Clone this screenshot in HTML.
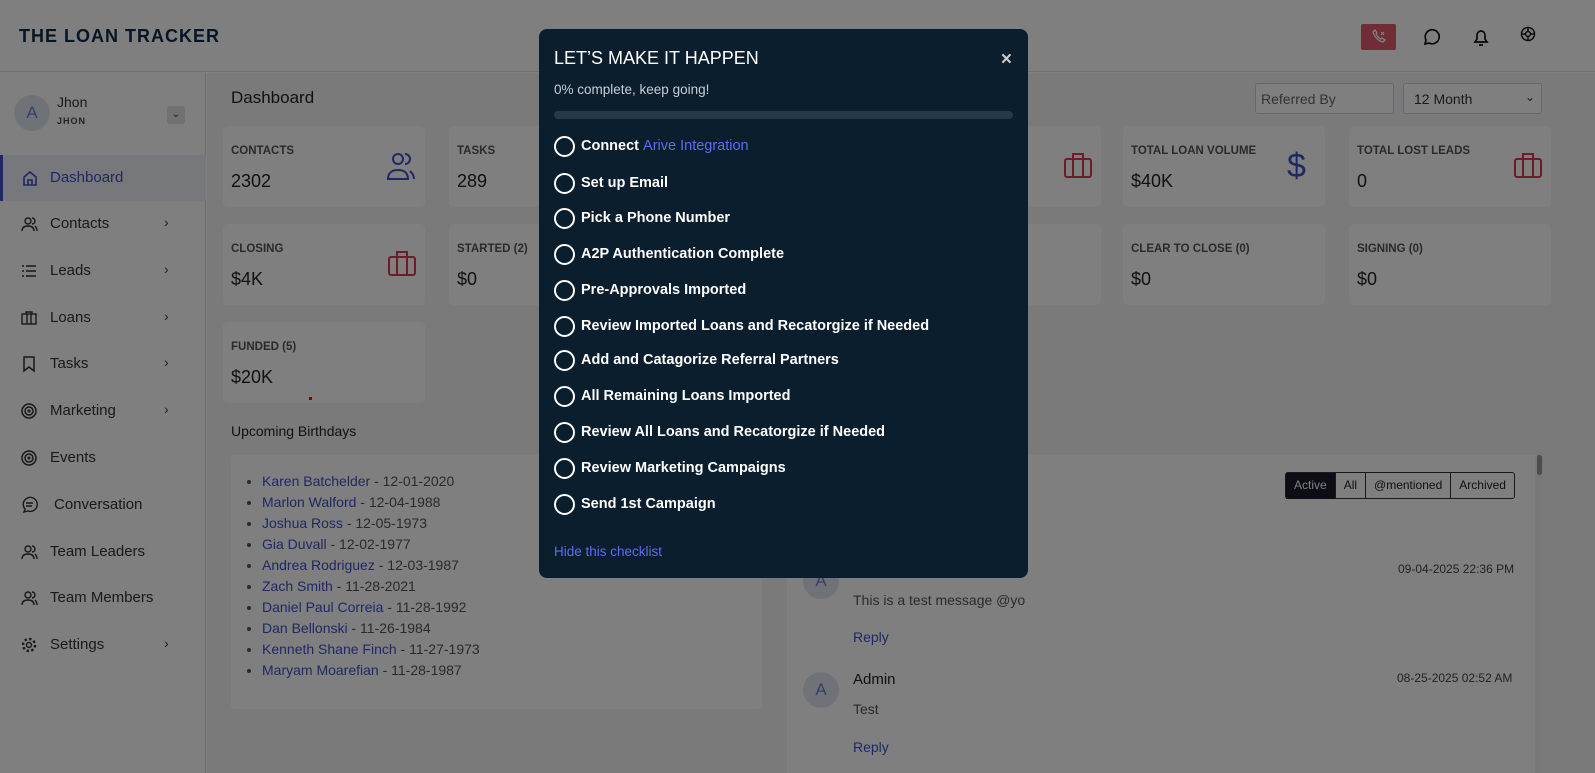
<!DOCTYPE html>
<html><head><meta charset="utf-8"><style>
*{box-sizing:border-box;margin:0;padding:0}
body{width:1595px;height:773px;overflow:hidden;font-family:"Liberation Sans",sans-serif;background:#fff;position:relative;color:#333}
.top{position:absolute;left:0;top:0;width:1595px;height:72px;background:#fff;border-bottom:1px solid #ddd}
.logo{position:absolute;left:19px;top:26px;font-weight:bold;font-size:18px;letter-spacing:1px;color:#0b2a45}
.side{position:absolute;left:0;top:73px;width:206px;height:700px;background:#fff;border-right:1px solid #ddd}
.main{position:absolute;left:207px;top:73px;width:1388px;height:700px;background:#f4f5f7}
.av{position:absolute;width:36px;height:36px;border-radius:50%;background:#dfe6f0;color:#6a7fd0;font-size:17px;text-align:center;line-height:36px}
.nav{position:absolute;left:0;width:206px;height:46px;font-size:15px;color:#333}
.nav span{position:absolute;left:50px;top:14px}
.nav svg{position:absolute;left:20px;top:14px}
.nav i{position:absolute;left:164px;top:13px;font-style:normal;font-size:14px;color:#444}
.card{position:absolute;width:202px;height:81px;background:#fff;border-radius:5px}
.card b{position:absolute;left:8px;top:19px;font-size:11.5px;font-weight:bold;color:#555}
.card em{position:absolute;left:8px;top:45px;font-style:normal;font-size:18px;color:#222}
.card svg{position:absolute;right:8px;top:25px}
.ov{position:absolute;left:0;top:0;width:1595px;height:773px;background:rgba(0,0,0,.5)}
.modal{position:absolute;left:539px;top:29px;width:489px;height:549px;background:#0b1e2d;border-radius:8px;color:#fff}
.it{position:absolute;left:15px;font-size:14.5px;font-weight:bold;line-height:18px}
.it:before{content:"";position:absolute;left:0;top:-1px;width:17px;height:17px;border:2px solid #fff;border-radius:50%}
.it span{margin-left:27px}
.bd{font-size:14px;line-height:21px;color:#555}
.bd a{color:#3f51c8;text-decoration:none}
.btn{display:inline-block;padding:0 8px;height:26px;line-height:25px;font-size:12px;border-left:1px solid #333}
</style></head><body>
<div class="top"><div class="logo">THE LOAN TRACKER</div>
<div style="position:absolute;left:1361px;top:24px;width:35px;height:26px;background:#e05b6a;border-radius:2px"><svg width="35" height="26"><path d="M12 8c1 4 5 9 10 10l2-2-3-2-1 1c-2-1-4-3-5-5l1-1-2-3z" fill="none" stroke="#fff" stroke-width="1.3"/><path d="M20 8l3 3M23 8l-3 3" stroke="#fff" stroke-width="1.2"/></svg></div>
<svg style="position:absolute;left:1421px;top:28px" width="20" height="20"><path d="M4 16l1-4a7 7 0 1 1 3 3z" fill="none" stroke="#111" stroke-width="1.7"/></svg>
<svg style="position:absolute;left:1470px;top:26px" width="22" height="22"><path d="M5 16h12l-2-3V9a4 4 0 0 0-8 0v4zM9 19h4" fill="none" stroke="#111" stroke-width="1.7"/></svg>
<svg style="position:absolute;left:1519px;top:25px" width="18" height="18"><circle cx="9" cy="9" r="6.5" fill="none" stroke="#111" stroke-width="1.5"/><circle cx="9" cy="9" r="2.5" fill="none" stroke="#111" stroke-width="1.5"/><path d="M9 2v4M9 12v4M2 9h4M12 9h4" stroke="#111" stroke-width="1.5"/></svg>
</div>
<div class="side">
<div class="av" style="left:14px;top:22px">A</div>
<div style="position:absolute;left:57px;top:21px;font-size:14px">Jhon</div>
<div style="position:absolute;left:57px;top:43px;font-size:9px;font-weight:bold;letter-spacing:1px;color:#444">JHON</div>
<div style="position:absolute;left:167px;top:33px;width:18px;height:18px;background:#e2e2e2;border-radius:3px;text-align:center;font-size:10px;line-height:18px">&#8964;</div>
<div class="nav" style="top:82px;background:#eef0f6;border-left:3px solid #3f51c8;color:#3f51c8"><svg width="18" height="18" style="left:18px"><path d="M3 8l6-5 6 5v8H3zM7 16v-5h4v5" fill="none" stroke="#3f51c8" stroke-width="1.6"/></svg><span style="left:47px">Dashboard</span></div>
<div class="nav" style="top:128px"><svg width="18" height="18"><circle cx="8" cy="6" r="3" fill="none" stroke="#333" stroke-width="1.4"/><path d="M2 16c0-4 3-5 6-5s6 1 6 5M12 3a3 3 0 0 1 0 6M15 11c1 1 2 2 2 5" fill="none" stroke="#333" stroke-width="1.4"/></svg><span>Contacts</span><i>›</i></div>
<div class="nav" style="top:175px"><svg width="18" height="18"><path d="M2 4h2M6 4h10M2 9h2M6 9h10M2 14h2M6 14h10" stroke="#333" stroke-width="1.5"/></svg><span>Leads</span><i>›</i></div>
<div class="nav" style="top:222px"><svg width="18" height="18"><rect x="2" y="5" width="14" height="10" fill="none" stroke="#333" stroke-width="1.4"/><path d="M6 5V3h6v2M7 5v10M11 5v10" fill="none" stroke="#333" stroke-width="1.4"/></svg><span>Loans</span><i>›</i></div>
<div class="nav" style="top:268px"><svg width="18" height="18"><path d="M4 2h10v14l-5-4-5 4z" fill="none" stroke="#333" stroke-width="1.5"/></svg><span>Tasks</span><i>›</i></div>
<div class="nav" style="top:315px"><svg width="18" height="18"><circle cx="9" cy="9" r="7" fill="none" stroke="#333" stroke-width="1.5"/><circle cx="9" cy="9" r="4" fill="none" stroke="#333" stroke-width="1.5"/><circle cx="9" cy="9" r="1.5" fill="#333"/></svg><span>Marketing</span><i>›</i></div>
<div class="nav" style="top:362px"><svg width="18" height="18"><circle cx="9" cy="9" r="7" fill="none" stroke="#333" stroke-width="1.5"/><circle cx="9" cy="9" r="4" fill="none" stroke="#333" stroke-width="1.5"/><circle cx="9" cy="9" r="1.5" fill="#333"/></svg><span>Events</span></div>
<div class="nav" style="top:409px"><svg width="18" height="18"><path d="M4 16l1-3a7 7 0 1 1 3 2zM6 7h7M6 10h6" fill="none" stroke="#333" stroke-width="1.4"/></svg><span style="left:54px">Conversation</span></div>
<div class="nav" style="top:456px"><svg width="18" height="18"><circle cx="8" cy="6" r="3" fill="none" stroke="#333" stroke-width="1.4"/><path d="M2 16c0-4 3-5 6-5s6 1 6 5M12 3a3 3 0 0 1 0 6M15 11c1 1 2 2 2 5" fill="none" stroke="#333" stroke-width="1.4"/></svg><span>Team Leaders</span></div>
<div class="nav" style="top:502px"><svg width="18" height="18"><circle cx="8" cy="6" r="3" fill="none" stroke="#333" stroke-width="1.4"/><path d="M2 16c0-4 3-5 6-5s6 1 6 5M12 3a3 3 0 0 1 0 6M15 11c1 1 2 2 2 5" fill="none" stroke="#333" stroke-width="1.4"/></svg><span>Team Members</span></div>
<div class="nav" style="top:549px"><svg width="18" height="18"><circle cx="9" cy="9" r="2.5" fill="none" stroke="#333" stroke-width="1.4"/><circle cx="9" cy="9" r="6" fill="none" stroke="#333" stroke-width="2.4" stroke-dasharray="2.4 2.3"/></svg><span>Settings</span><i>›</i></div>
</div>
<div class="main">
<div style="position:absolute;left:24px;top:15px;font-size:17px;color:#222">Dashboard</div>
<div style="position:absolute;left:1048px;top:10px;width:139px;height:31px;background:#fff;border:1px solid #ccd;border-radius:3px;font-size:14px;color:#666;padding:7px 5px">Referred By</div>
<div style="position:absolute;left:1196px;top:10px;width:139px;height:31px;background:#fff;border:1px solid #ccd;border-radius:3px;font-size:14px;color:#333;padding:7px 10px">12 Month<span style="position:absolute;right:6px;top:6px;font-size:12px">&#8964;</span></div>
</div>
<div class="card" style="left:223px;top:126px"><b>CONTACTS</b><em>2302</em><svg width="32" height="30"><circle cx="13" cy="8" r="5" fill="none" stroke="#3f51c8" stroke-width="2"/><path d="M3 28c0-7 5-9 10-9s10 2 10 9zM20 3a5 5 0 0 1 0 10M25 20c2 2 4 4 4 8" fill="none" stroke="#3f51c8" stroke-width="2"/></svg></div>
<div class="card" style="left:449px;top:126px"><b>TASKS</b><em>289</em></div>
<div class="card" style="left:899px;top:126px"><svg width="30" height="28"><rect x="2" y="8" width="26" height="18" rx="2" fill="none" stroke="#d83a4e" stroke-width="2"/><path d="M10 8V3h10v5M10 8v18M20 8v18" fill="none" stroke="#d83a4e" stroke-width="2"/></svg></div>
<div class="card" style="left:1123px;top:126px"><b>TOTAL LOAN VOLUME</b><em>$40K</em><svg width="24" height="34" style="top:22px;right:14px"><text x="0" y="29" font-size="34" fill="#3f51c8" font-family="Liberation Sans">$</text></svg></div>
<div class="card" style="left:1349px;top:126px"><b>TOTAL LOST LEADS</b><em>0</em><svg width="30" height="28"><rect x="2" y="8" width="26" height="18" rx="2" fill="none" stroke="#d83a4e" stroke-width="2"/><path d="M10 8V3h10v5M10 8v18M20 8v18" fill="none" stroke="#d83a4e" stroke-width="2"/></svg></div>
<div class="card" style="left:223px;top:224px"><b>CLOSING</b><em>$4K</em><svg width="30" height="28"><rect x="2" y="8" width="26" height="18" rx="2" fill="none" stroke="#d83a4e" stroke-width="2"/><path d="M10 8V3h10v5M10 8v18M20 8v18" fill="none" stroke="#d83a4e" stroke-width="2"/></svg></div>
<div class="card" style="left:449px;top:224px"><b>STARTED (2)</b><em>$0</em></div>
<div class="card" style="left:899px;top:224px"><b style="left:125px">)</b></div>
<div class="card" style="left:1123px;top:224px"><b>CLEAR TO CLOSE (0)</b><em>$0</em></div>
<div class="card" style="left:1349px;top:224px"><b>SIGNING (0)</b><em>$0</em></div>
<div class="card" style="left:223px;top:322px"><b>FUNDED (5)</b><em>$20K</em><div style="position:absolute;left:86px;top:75px;width:3px;height:3px;background:#f00"></div></div>
<div style="position:absolute;left:231px;top:423px;font-size:14px;color:#222">Upcoming Birthdays</div>
<div style="position:absolute;left:231px;top:455px;width:531px;height:254px;background:#fff;border-radius:4px"></div>
<ul class="bd" style="position:absolute;left:262px;top:471px;list-style:disc">
<li><a>Karen Batchelder</a> - 12-01-2020</li><li><a>Marlon Walford</a> - 12-04-1988</li><li><a>Joshua Ross</a> - 12-05-1973</li><li><a>Gia Duvall</a> - 12-02-1977</li><li><a>Andrea Rodriguez</a> - 12-03-1987</li><li><a>Zach Smith</a> - 11-28-2021</li><li><a>Daniel Paul Correia</a> - 11-28-1992</li><li><a>Dan Bellonski</a> - 11-26-1984</li><li><a>Kenneth Shane Finch</a> - 11-27-1973</li><li><a>Maryam Moarefian</a> - 11-28-1987</li></ul>
<div style="position:absolute;left:787px;top:455px;width:748px;height:318px;background:#fff"></div>
<div style="position:absolute;left:1535px;top:455px;width:8px;height:318px;background:#f0f0f0"><div style="margin:0 auto;width:5px;height:20px;background:#999;border-radius:3px"></div></div>
<div style="position:absolute;left:1285px;top:472px;height:27px;border:1px solid #333;border-radius:3px;color:#222;white-space:nowrap;background:#fff"><span class="btn" style="background:#1b1b2b;color:#fff;border:0">Active</span><span class="btn">All</span><span class="btn">@mentioned</span><span class="btn">Archived</span></div>
<div class="av" style="left:803px;top:563px">A</div>
<div style="position:absolute;left:1398px;top:562px;font-size:12px;color:#444">09-04-2025 22:36 PM</div>
<div style="position:absolute;left:853px;top:592px;font-size:14px;color:#555">This is a test message @yo</div>
<div style="position:absolute;left:853px;top:629px;font-size:14px;color:#3f51c8">Reply</div>
<div class="av" style="left:803px;top:672px">A</div>
<div style="position:absolute;left:853px;top:671px;font-size:15px;color:#222">Admin</div>
<div style="position:absolute;left:1397px;top:671px;font-size:12px;color:#444">08-25-2025 02:52 AM</div>
<div style="position:absolute;left:853px;top:701px;font-size:14px;color:#555">Test</div>
<div style="position:absolute;left:853px;top:739px;font-size:14px;color:#3f51c8">Reply</div>
<div class="ov"></div>
<div class="modal">
<div style="position:absolute;left:15px;top:19px;font-size:18px">LET’S MAKE IT HAPPEN</div>
<div style="position:absolute;right:16px;top:20px;font-size:19px;font-weight:bold;color:#ccc">×</div>
<div style="position:absolute;left:15px;top:53px;font-size:13.5px;color:#c8ced6">0% complete, keep going!</div>
<div style="position:absolute;left:15px;top:82px;width:459px;height:8px;background:#27384a;border-radius:4px"></div>
<div class="it" style="top:108px"><span>Connect <span style="margin:0;color:#5b6ef0;font-weight:normal">Arive Integration</span></span></div>
<div class="it" style="top:145px"><span>Set up Email</span></div>
<div class="it" style="top:180px"><span>Pick a Phone Number</span></div>
<div class="it" style="top:216px"><span>A2P Authentication Complete</span></div>
<div class="it" style="top:252px"><span>Pre-Approvals Imported</span></div>
<div class="it" style="top:288px"><span>Review Imported Loans and Recatorgize if Needed</span></div>
<div class="it" style="top:322px"><span>Add and Catagorize Referral Partners</span></div>
<div class="it" style="top:358px"><span>All Remaining Loans Imported</span></div>
<div class="it" style="top:394px"><span>Review All Loans and Recatorgize if Needed</span></div>
<div class="it" style="top:430px"><span>Review Marketing Campaigns</span></div>
<div class="it" style="top:466px"><span>Send 1st Campaign</span></div>
<div style="position:absolute;left:15px;top:515px;font-size:13.5px;color:#5b6ef0">Hide this checklist</div>
</div>
</body></html>
